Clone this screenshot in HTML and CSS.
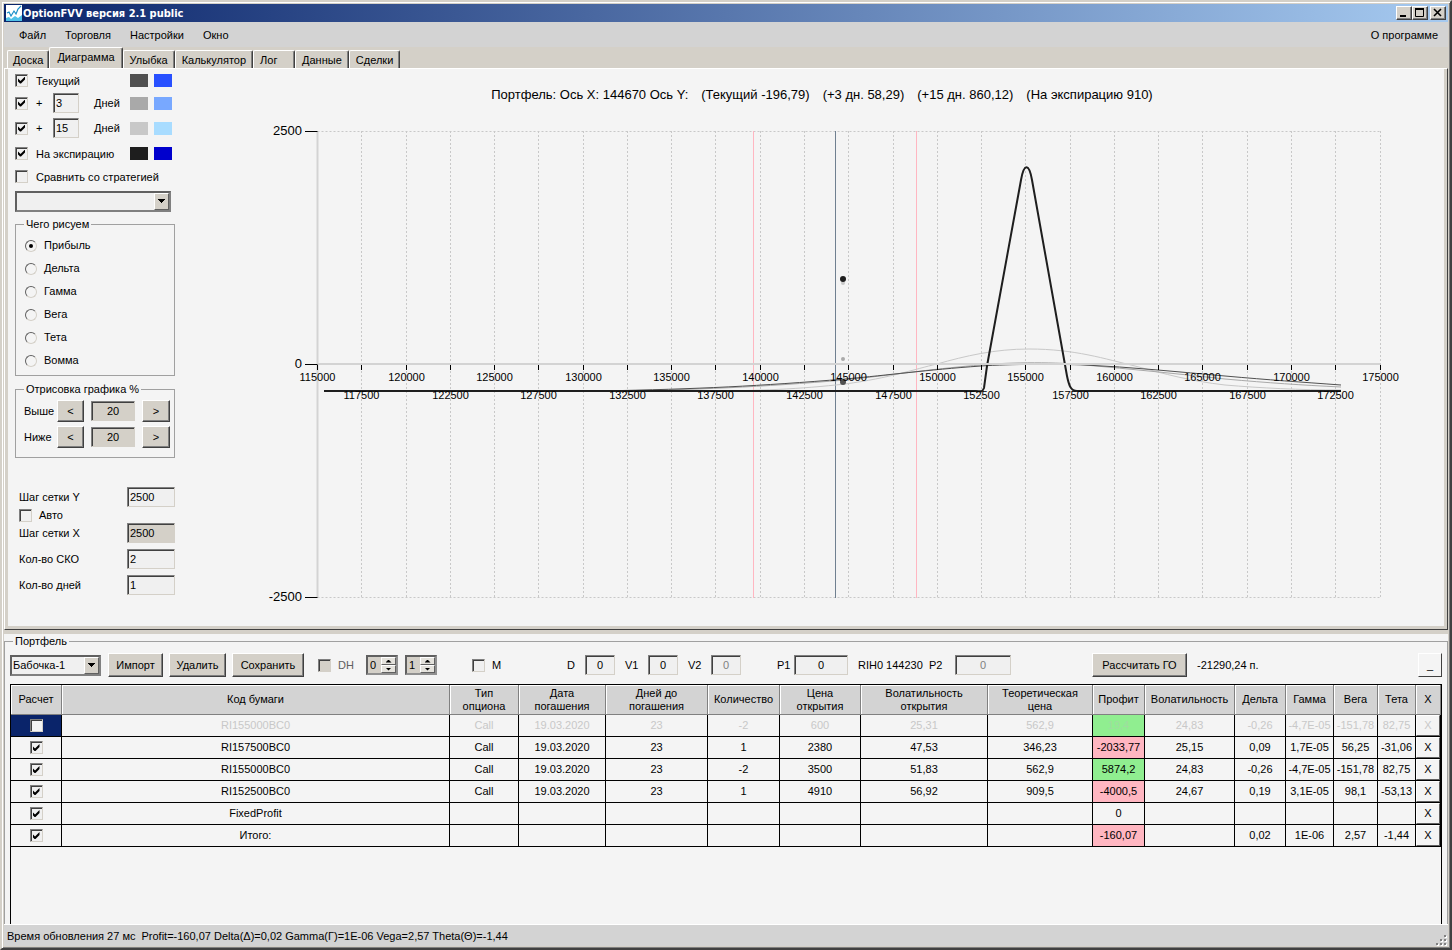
FILE: index.html
```html
<!DOCTYPE html>
<html lang="ru">
  <head>
    <meta charset="UTF-8" />
    <meta name="viewport" content="width=device-width, initial-scale=1.0" />
    <title>OptionFVV версия 2.1 public</title>
    <link rel="stylesheet" href="styles.css">
  </head>
  <body>
    <div class="window">
      <header class="titlebar">
        <svg class="app-icon" viewBox="0 0 16 16">
          <rect width="16" height="16" fill="#fff" />
          <path d="M0 16V13L3 12L5 14L9 11L12 13L16 10V16Z" fill="#4fc0e8" />
          <path d="M1 8L3 7L5 11L8 6L10 9L12 4L15 1" fill="none" stroke="#1c8fc8" stroke-width="1.2" />
        </svg>
        <h1>OptionFVV версия 2.1 public</h1>
        <div class="win-buttons">
          <button type="button" aria-label="Свернуть"><svg viewBox="0 0 12 10"><path d="M2 8h6" stroke="#000" stroke-width="2" /></svg></button>
          <button type="button" aria-label="Развернуть"><svg viewBox="0 0 12 10"><path d="M1.5 1v7.5h8V1" fill="none" stroke="#000" /><path d="M1 1h9" stroke="#000" stroke-width="2" /></svg></button>
          <button type="button" class="close" aria-label="Закрыть"><svg viewBox="0 0 12 10"><path d="M2 1l7 7M9 1l-7 7" stroke="#000" stroke-width="1.6" /></svg></button>
        </div>
      </header>

      <nav class="menu">
        <a href="#">Файл</a>
        <a href="#">Торговля</a>
        <a href="#">Настройки</a>
        <a href="#">Окно</a>
        <a href="#" class="about">О программе</a>
      </nav>

      <div class="tabs" role="tablist">
        <button type="button" role="tab">Доска</button>
        <button type="button" role="tab" class="active">Диаграмма</button>
        <button type="button" role="tab">Улыбка</button>
        <button type="button" role="tab">Калькулятор</button>
        <button type="button" role="tab">Лог</button>
        <button type="button" role="tab">Данные</button>
        <button type="button" role="tab">Сделки</button>
      </div>

      <main class="page">
        <div class="settings">
          <div class="lines">
            <div class="line-row">
              <input type="checkbox" id="l0" checked><label for="l0" class="wide">Текущий</label>
              <i class="swatch" style="background: #505050"></i><i class="swatch" style="background: #2850ff"></i>
            </div>
            <div class="line-row">
              <input type="checkbox" id="l1" checked><label for="l1">+</label>
              <input type="text" id="d1" value="3"><label for="d1">Дней</label>
              <i class="swatch" style="background: #a9a9a9"></i><i class="swatch" style="background: #78a8ff"></i>
            </div>
            <div class="line-row">
              <input type="checkbox" id="l2" checked><label for="l2">+</label>
              <input type="text" id="d2" value="15"><label for="d2">Дней</label>
              <i class="swatch" style="background: #c8c8c8"></i><i class="swatch" style="background: #a8dcff"></i>
            </div>
            <div class="line-row">
              <input type="checkbox" id="l3" checked><label for="l3" class="wide">На экспирацию</label>
              <i class="swatch" style="background: #1e1e1e"></i><i class="swatch" style="background: #0000cd"></i>
            </div>
            <div class="line-row">
              <input type="checkbox" id="l4"><label for="l4" class="full">Сравнить со стратегией</label>
            </div>
          </div>
          <div class="combo combo-compare">
            <select aria-label="Стратегия"><option></option></select>
            <svg class="combo-arrow" viewBox="0 0 13 15"><path d="M3 5h7v1h-1v1h-1v1h-1v1h-1v-1h-1v-1h-1v-1h-1z" /></svg>
          </div>

          <fieldset class="group what">
            <legend>Чего рисуем</legend>
            <label><input type="radio" name="what" checked>Прибыль</label>
            <label><input type="radio" name="what">Дельта</label>
            <label><input type="radio" name="what">Гамма</label>
            <label><input type="radio" name="what">Вега</label>
            <label><input type="radio" name="what">Тета</label>
            <label><input type="radio" name="what">Вомма</label>
          </fieldset>

          <fieldset class="group range">
            <legend>Отрисовка графика %</legend>
            <div class="range-row">
              <label for="above">Выше</label>
              <button type="button" class="btn">&lt;</button>
              <input type="text" id="above" value="20" class="flat">
              <button type="button" class="btn">&gt;</button>
            </div>
            <div class="range-row">
              <label for="below">Ниже</label>
              <button type="button" class="btn">&lt;</button>
              <input type="text" id="below" value="20" class="flat">
              <button type="button" class="btn">&gt;</button>
            </div>
          </fieldset>

          <div class="grid-fields">
            <div class="field"><label for="stepy">Шаг сетки Y</label><input type="text" id="stepy" value="2500"></div>
            <div class="auto"><input type="checkbox" id="auto"><label for="auto">Авто</label></div>
            <div class="field"><label for="stepx">Шаг сетки X</label><input type="text" id="stepx" value="2500" class="flat"></div>
            <div class="field"><label for="sko">Кол-во СКО</label><input type="text" id="sko" value="2"></div>
            <div class="field"><label for="days">Кол-во дней</label><input type="text" id="days" value="1"></div>
          </div>
        </div>

        <section class="chart">
          <h2>
            <span>Портфель: Ось X: 144670 Ось Y:</span>
            <span>(Текущий -196,79)</span>
            <span>(+3 дн. 58,29)</span>
            <span>(+15 дн. 860,12)</span>
            <span>(На экспирацию 910)</span>
          </h2>
          <svg id="plot" viewBox="176 105 1268 521" preserveAspectRatio="xMidYMin meet">
            <g id="grid"></g>
            <path class="mark pink" d="M753.5 131V598" />
            <path class="mark pink" d="M916.5 131V598" />
            <path class="mark price" d="M835.5 131V598" />
            <path class="curve c-15" d="M324 391H700C760 391 800 389 845 384C890 378 915 369 937 364C965 356 995 349 1029 349C1075 349 1105 359 1135 366C1165 374 1190 381 1225 385C1260 388 1300 390 1341 390" />
            <path class="curve c-3" d="M324 391H600C700 390 760 387 845 380C900 374 940 368 981 365C1010 362 1060 362 1085 365C1130 369 1180 374 1225 379C1270 383 1300 385 1341 387" />
            <path class="curve c-0" d="M324 391H600C700 389 760 386 845 379C890 375 925 370 981 366C1010 364 1060 364 1085 365C1130 367 1180 372 1225 376C1270 380 1300 382 1341 385" />
            <path class="curve c-exp" d="M324 391H976C980 391 982 393 984 388L987 366L1021 180C1024 163 1029 163 1032 180L1067 376C1069 386 1071 391 1077 391H1341" />
            <circle cx="843" cy="283" r="2" fill="#c8c8c8" />
            <circle cx="843" cy="279" r="3" fill="#1e1e1e" />
            <circle cx="843" cy="359" r="2" fill="#a9a9a9" />
            <circle cx="843" cy="382" r="3" fill="#505050" />
            <g id="axis"></g>
          </svg>
        </section>
      </main>

      <div class="bottom">
        <fieldset class="portfolio">
          <legend>Портфель</legend>
          <div class="toolbar">
            <div class="combo combo-name">
              <select aria-label="Портфель"><option>Бабочка-1</option></select>
              <svg class="combo-arrow" viewBox="0 0 13 15"><path d="M3 5h7v1h-1v1h-1v1h-1v1h-1v-1h-1v-1h-1v-1h-1z" /></svg>
            </div>
            <button type="button" class="btn b-import">Импорт</button>
            <button type="button" class="btn b-delete">Удалить</button>
            <button type="button" class="btn b-save">Сохранить</button>
            <div class="tool dh"><input type="checkbox" id="dh" disabled><label for="dh">DH</label></div>
            <div class="spin"><input type="number" value="0" aria-label="DH от"><span><button type="button" class="up" aria-label="Больше"></button><button type="button" class="down" aria-label="Меньше"></button></span></div>
            <div class="spin"><input type="number" value="1" aria-label="DH до"><span><button type="button" class="up" aria-label="Больше"></button><button type="button" class="down" aria-label="Меньше"></button></span></div>
            <div class="tool m"><input type="checkbox" id="m"><label for="m">M</label></div>
            <div class="tool d"><label for="dd">D</label><input type="text" id="dd" value="0"></div>
            <div class="tool v"><label for="v1">V1</label><input type="text" id="v1" value="0"></div>
            <div class="tool v"><label for="v2">V2</label><input type="text" id="v2" value="0" disabled></div>
            <div class="tool p1"><label for="p1">P1</label><input type="text" id="p1" value="0"></div>
            <span class="ticker">RIH0 144230</span>
            <div class="tool p2"><label for="p2">P2</label><input type="text" id="p2" value="0" disabled></div>
            <button type="button" class="btn b-calc">Рассчитать ГО</button>
            <span class="margin-sum">-21290,24 п.</span>
            <button type="button" class="btn plain b-min">_</button>
          </div>

          <div class="grid-box">
            <table>
              <colgroup>
                <col class="w51"><col><col class="w69"><col class="w87"><col class="w102"><col class="w72"><col class="w81"><col class="w127"><col class="w105"><col class="w52"><col class="w90"><col class="w51"><col class="w48"><col class="w44"><col class="w38"><col class="w25">
              </colgroup>
              <thead>
                <tr>
                  <th>Расчет</th><th>Код бумаги</th><th>Тип<br>опциона</th><th>Дата<br>погашения</th><th>Дней до<br>погашения</th><th>Количество</th><th>Цена<br>открытия</th><th>Волатильность<br>открытия</th><th>Теоретическая<br>цена</th><th>Профит</th><th>Волатильность</th><th>Дельта</th><th>Гамма</th><th>Вега</th><th>Тета</th><th>X</th>
                </tr>
              </thead>
              <tbody>
                <tr class="off">
                  <td class="selected"><input type="checkbox" aria-label="Расчет"></td><td>RI155000BC0</td><td>Call</td><td>19.03.2020</td><td>23</td><td>-2</td><td>600</td><td>25,31</td><td>562,9</td><td class="up">19,4</td><td>24,83</td><td>-0,26</td><td>-4,7E-05</td><td>-151,78</td><td>82,75</td><td><button type="button">X</button></td>
                </tr>
                <tr>
                  <td><input type="checkbox" aria-label="Расчет" checked></td><td>RI157500BC0</td><td>Call</td><td>19.03.2020</td><td>23</td><td>1</td><td>2380</td><td>47,53</td><td>346,23</td><td class="down">-2033,77</td><td>25,15</td><td>0,09</td><td>1,7E-05</td><td>56,25</td><td>-31,06</td><td><button type="button">X</button></td>
                </tr>
                <tr>
                  <td><input type="checkbox" aria-label="Расчет" checked></td><td>RI155000BC0</td><td>Call</td><td>19.03.2020</td><td>23</td><td>-2</td><td>3500</td><td>51,83</td><td>562,9</td><td class="up">5874,2</td><td>24,83</td><td>-0,26</td><td>-4,7E-05</td><td>-151,78</td><td>82,75</td><td><button type="button">X</button></td>
                </tr>
                <tr>
                  <td><input type="checkbox" aria-label="Расчет" checked></td><td>RI152500BC0</td><td>Call</td><td>19.03.2020</td><td>23</td><td>1</td><td>4910</td><td>56,92</td><td>909,5</td><td class="down">-4000,5</td><td>24,67</td><td>0,19</td><td>3,1E-05</td><td>98,1</td><td>-53,13</td><td><button type="button">X</button></td>
                </tr>
                <tr>
                  <td><input type="checkbox" aria-label="Расчет" checked></td><td>FixedProfit</td><td></td><td></td><td></td><td></td><td></td><td></td><td></td><td>0</td><td></td><td></td><td></td><td></td><td></td><td><button type="button">X</button></td>
                </tr>
                <tr>
                  <td><input type="checkbox" aria-label="Расчет" checked></td><td>Итого:</td><td></td><td></td><td></td><td></td><td></td><td></td><td></td><td class="down">-160,07</td><td></td><td>0,02</td><td>1E-06</td><td>2,57</td><td>-1,44</td><td><button type="button">X</button></td>
                </tr>
              </tbody>
            </table>
          </div>
        </fieldset>
      </div>

      <footer class="status">
        <span>Время обновления 27 мс</span>
        <span>Profit=-160,07 Delta(Δ)=0,02 Gamma(Γ)=1E-06 Vega=2,57 Theta(Θ)=-1,44</span>
        <svg class="grip" viewBox="0 0 12 12">
          <path d="M10 2h2v2h-2zM6 6h2v2h-2zM10 6h2v2h-2zM2 10h2v2h-2zM6 10h2v2h-2zM10 10h2v2h-2z" fill="#fff" />
          <path d="M9 1h2v2h-2zM5 5h2v2h-2zM9 5h2v2h-2zM1 9h2v2h-2zM5 9h2v2h-2zM9 9h2v2h-2z" fill="#808080" />
        </svg>
      </footer>
    </div>
    <script src="chart.js"></script>
  </body>
</html>
```

FILE: styles.css
```css
* {
  box-sizing: border-box;
}

body {
  margin: 0;
  font-family: "Liberation Sans", Arial, sans-serif;
  font-size: 11px;
  line-height: 13px;
  color: #000;
  background: #d4d0c8;
}

button,
input,
select {
  font: inherit;
  color: inherit;
  margin: 0;
  padding: 0;
  border-radius: 0;
}

.window {
  display: flex;
  flex-direction: column;
  min-height: 100vh;
  padding: 2px;
  border: 2px solid;
  border-color: #d4d0c8 #404040 #404040 #d4d0c8;
  box-shadow: inset 1px 1px 0 #fff, inset -1px -1px 0 #808080;
}

/* заголовок окна */
.titlebar {
  display: flex;
  align-items: center;
  height: 18px;
  padding: 0 2px;
  background: linear-gradient(to right, #0a246a, #a6caf0);
}

.app-icon {
  width: 16px;
  height: 16px;
}

.titlebar h1 {
  flex: 1;
  margin: 0 0 0 1px;
  font-family: "DejaVu Sans Condensed", "DejaVu Sans", sans-serif;
  font-size: 11px;
  color: #fff;
}

.win-buttons {
  display: flex;
}

.win-buttons button {
  display: flex;
  justify-content: center;
  align-items: center;
  width: 16px;
  height: 14px;
}

.win-buttons svg {
  width: 12px;
  height: 10px;
}

.win-buttons .close {
  margin-left: 2px;
}

.win-buttons button,
.btn {
  background: #d4d0c8;
  border: 1px solid;
  border-color: #fff #404040 #404040 #fff;
  box-shadow: inset -1px -1px 0 #808080;
}

.btn.plain {
  background: #f4f4f4;
  box-shadow: none;
}

/* меню */
.menu {
  display: flex;
  align-items: center;
  height: 25px;
  padding: 2px 10px 0 15px;
  gap: 19px;
  background: #d3d3d3;
}

.menu a {
  color: #000;
  text-decoration: none;
}

.menu .about {
  margin-left: auto;
}

/* вкладки */
.tabs {
  display: flex;
  align-items: flex-end;
  height: 21px;
  padding-left: 3px;
}

.tabs button {
  height: 18px;
  min-width: 42px;
  padding: 1px 6px 0;
  background: #d4d0c8;
  border: 1px solid;
  border-color: #fff #404040 #d4d0c8 #fff;
  border-bottom: 0;
  border-radius: 2px 2px 0 0;
  box-shadow: inset -1px 0 0 #808080;
  text-align: left;
  white-space: nowrap;
}

.tabs button:first-child {
  padding: 1px 5px 0;
}

.tabs .active {
  height: 21px;
  padding: 0 7px 2px;
}

/* страница с диаграммой */
.page {
  display: flex;
  min-height: 561px;
  padding: 0 3px 3px;
  background: #f4f4f4;
  border: 1px solid;
  border-color: #fff #404040 #404040 #fff;
  box-shadow: inset 3px 0 0 #d4d0c8, inset -3px -3px 0 #d4d0c8;
}

.settings {
  display: flex;
  flex-direction: column;
  flex: none;
  width: 168px;
  padding-left: 7px;
}

.lines {
  display: grid;
  grid-template-rows: 22px 24px 26px 24px 22px;
}

.line-row {
  display: grid;
  grid-template-columns: 21px 17px 41px 36px 24px 18px;
  align-items: center;
}

.line-row .wide {
  grid-column: span 3;
  padding-top: 2px;
}

.line-row .full {
  grid-column: span 5;
  padding-top: 2px;
}

.line-row input[type="text"] {
  width: 26px;
}

.swatch {
  width: 18px;
  height: 13px;
}

input[type="text"] {
  height: 20px;
  padding: 0 2px;
  background: #f0f0f0;
  border: 1px solid;
  border-color: #808080 #d4d0c8 #d4d0c8 #808080;
  box-shadow: inset 1px 1px 0 #404040;
}

input[type="text"].flat {
  background: #d4d0c8;
}

input:disabled {
  color: #808080;
}

input[type="checkbox"] {
  appearance: none;
  display: grid;
  place-items: center;
  width: 13px;
  height: 13px;
  background: #f0f0f0;
  border: 1px solid;
  border-color: #808080 #d4d0c8 #d4d0c8 #808080;
  box-shadow: inset 1px 1px 0 #404040;
}

input[type="checkbox"]:checked::after {
  content: "";
  width: 7px;
  height: 7px;
  background: #000;
  clip-path: polygon(0 29%, 0 71%, 29% 100%, 43% 100%, 100% 43%, 100% 0, 36% 64%);
}

input[type="checkbox"]:disabled {
  background: #d4d0c8;
}

input[type="radio"] {
  appearance: none;
  display: grid;
  place-items: center;
  width: 12px;
  height: 12px;
  background: #f4f4f4;
  border: 1px solid;
  border-color: #606060 #d4d0c8 #d4d0c8 #606060;
  border-radius: 50%;
}

input[type="radio"]:checked::after {
  content: "";
  width: 4px;
  height: 4px;
  background: #000;
  border-radius: 50%;
}

.combo {
  position: relative;
  height: 21px;
}

.combo select {
  appearance: none;
  width: 100%;
  height: 100%;
  padding: 0 1px;
  background: #f0f0f0;
  border: 2px solid;
  border-color: #606060 #808080 #808080 #606060;
}

.combo-arrow {
  position: absolute;
  top: 2px;
  right: 2px;
  width: 15px;
  height: 17px;
  background: #d4d0c8;
  border: 1px solid;
  border-color: #fff #606060 #606060 #fff;
  pointer-events: none;
}

.combo-compare {
  width: 156px;
  margin: 4px 0 6px;
}

.group {
  width: 160px;
  margin: 0;
  padding: 0;
  border: 1px solid #a0a0a0;
}

.group legend {
  margin-left: 8px;
  padding: 0 2px;
}

.what {
  height: 158px;
  padding-top: 3px;
}

.what label {
  display: flex;
  align-items: center;
  gap: 7px;
  height: 23px;
  padding-left: 9px;
}

.range {
  height: 75px;
  margin-top: 7px;
  padding-top: 2px;
}

.range-row {
  display: grid;
  grid-template-columns: 26px 27px 44px 28px;
  column-gap: 7px;
  align-items: center;
  height: 26px;
  padding-left: 8px;
}

.range-row .btn {
  height: 22px;
}

.range-row input {
  min-width: 0;
  text-align: center;
}

.grid-fields {
  padding: 29px 0 0 4px;
}

.field {
  display: flex;
  align-items: center;
  justify-content: space-between;
  width: 156px;
  margin-bottom: 6px;
}

.field input {
  width: 48px;
}

.auto {
  display: flex;
  align-items: center;
  gap: 7px;
  height: 16px;
  margin-top: -6px;
}

/* график */
.chart {
  flex: 1;
  min-width: 0;
}

.chart h2 {
  display: flex;
  justify-content: center;
  gap: 13px;
  height: 36px;
  margin: 0;
  padding: 17px 0 0 24px;
  font-size: 13px;
  font-weight: normal;
  line-height: 18px;
  white-space: nowrap;
}

#plot {
  display: block;
  width: 100%;
}

#plot text {
  font-size: 11px;
  text-anchor: middle;
}

#plot .y-label {
  font-size: 13px;
  text-anchor: end;
}

.grid-line {
  stroke: #c8c8c8;
  stroke-dasharray: 2 2;
}

.axis-line {
  stroke: #d3d3d3;
  stroke-width: 2;
}

.tick {
  stroke: #000;
}

.mark.pink {
  stroke: #ffb6c1;
}

.mark.price {
  stroke: #708090;
}

.curve {
  fill: none;
}

.c-0 {
  stroke: #505050;
}

.c-3 {
  stroke: #a9a9a9;
}

.c-15 {
  stroke: #c8c8c8;
}

.c-exp {
  stroke: #1e1e1e;
  stroke-width: 2;
}

/* портфель */
.bottom {
  display: flex;
  flex: 1;
  margin-top: 4px;
  padding-top: 1px;
  background: #f4f4f4;
}

.portfolio {
  display: flex;
  flex-direction: column;
  flex: 1;
  min-width: 0;
  margin: 0;
  padding: 4px 5px 0;
  border: 1px solid #a0a0a0;
  border-bottom: 0;
}

.portfolio legend {
  margin-left: 3px;
  padding: 0 2px;
}

.toolbar {
  display: flex;
  align-items: center;
  height: 26px;
  margin-bottom: 6px;
  white-space: nowrap;
}

.toolbar .btn {
  height: 24px;
  margin-right: 6px;
}

.combo-name {
  width: 91px;
  margin-right: 7px;
}

.b-import {
  width: 55px;
}

.b-delete {
  width: 57px;
}

.b-save {
  width: 72px;
}

.b-calc {
  width: 95px;
  margin-left: 81px;
}

.toolbar .b-min {
  width: 24px;
  margin: 0 0 0 auto;
}

.tool {
  display: flex;
  align-items: center;
}

.tool input[type="text"] {
  flex: none;
  text-align: center;
}

.dh {
  gap: 7px;
  width: 48px;
  margin-left: 8px;
  color: #606060;
}

.spin {
  display: flex;
  width: 32px;
  height: 20px;
  margin-right: 7px;
  background: #d4d0c8;
  border: 2px solid;
  border-color: #606060 #909090 #909090 #606060;
}

.spin input {
  appearance: textfield;
  width: 13px;
  padding-left: 2px;
  background: none;
  border: 0;
}

.spin input::-webkit-inner-spin-button {
  display: none;
}

.spin span {
  display: flex;
  flex-direction: column;
  width: 15px;
}

.spin button {
  display: grid;
  place-items: center;
  height: 8px;
  background: #e4e2dc;
  border: 1px solid;
  border-color: #fff #606060 #606060 #fff;
}

.spin button::after {
  content: "";
  width: 6px;
  height: 3px;
  background: #000;
  clip-path: polygon(50% 0, 100% 100%, 0 100%);
}

.spin .down::after {
  clip-path: polygon(0 0, 100% 0, 50% 100%);
}

.m {
  gap: 7px;
  width: 95px;
  margin-left: 28px;
}

.d label {
  width: 18px;
}

.d input,
.v input {
  width: 30px;
}

.v {
  margin-left: 10px;
}

.v label {
  width: 23px;
}

.p1 {
  margin-left: 36px;
}

.p1 label {
  width: 17px;
}

.p1 input {
  width: 54px;
}

.ticker {
  width: 81px;
  padding-left: 10px;
}

.p2 label {
  width: 26px;
}

.p2 input {
  width: 56px;
}

.margin-sum {
  margin-left: 4px;
}

.grid-box {
  flex: 1;
  border: 1px solid #000;
  border-bottom: 0;
}

table {
  width: 100%;
  table-layout: fixed;
  border-collapse: separate;
  border-spacing: 0;
  text-align: center;
}

.w25 { width: 25px; }
.w38 { width: 38px; }
.w44 { width: 44px; }
.w48 { width: 48px; }
.w51 { width: 51px; }
.w52 { width: 52px; }
.w69 { width: 69px; }
.w72 { width: 72px; }
.w81 { width: 81px; }
.w87 { width: 87px; }
.w90 { width: 90px; }
.w102 { width: 102px; }
.w105 { width: 105px; }
.w127 { width: 127px; }

th {
  height: 30px;
  padding: 0;
  background: #d3d3d3;
  border-right: 1px solid #808080;
  border-bottom: 1px solid #808080;
  box-shadow: inset 1px 1px 0 #fff;
  font-weight: normal;
}

td {
  height: 22px;
  padding: 0;
  border-right: 1px solid #000;
  border-bottom: 1px solid #000;
  white-space: nowrap;
}

td input[type="checkbox"] {
  margin: 0 auto;
}

td.selected {
  background: #0a246a;
}

td.selected input {
  background: #f4f4f4;
}

.off {
  color: #c8c8c8;
}

td.up {
  background: #90ee90;
}

td.down {
  background: #ffb6c1;
}

.off td.up {
  color: #a0dca0;
}

td button {
  display: block;
  width: 100%;
  height: 21px;
  background: #f4f4f4;
  border: 1px solid;
  border-color: #fff #606060 #606060 #fff;
}

/* строка состояния */
.status {
  display: flex;
  align-items: center;
  gap: 6px;
  height: 22px;
  padding: 2px 1px 0 3px;
  background: #d3d3d3;
  border-top: 1px solid #fff;
}

.grip {
  width: 12px;
  height: 12px;
  margin-left: auto;
  align-self: flex-end;
}
```

FILE: chart.js
```js
const NS = "http://www.w3.org/2000/svg";
const LEFT = 317.5;
const RIGHT = 1380;
const TOP = 131;
const BOTTOM = 598;
const ZERO = 364;

function line(parent, cls, x1, y1, x2, y2) {
  const el = document.createElementNS(NS, "line");
  el.setAttribute("class", cls);
  el.setAttribute("x1", x1);
  el.setAttribute("y1", y1);
  el.setAttribute("x2", x2);
  el.setAttribute("y2", y2);
  parent.appendChild(el);
}

function label(parent, cls, x, y, text) {
  const el = document.createElementNS(NS, "text");
  el.setAttribute("class", cls);
  el.setAttribute("x", x);
  el.setAttribute("y", y);
  el.textContent = text;
  parent.appendChild(el);
}

const grid = document.getElementById("grid");
const axis = document.getElementById("axis");

// сетка
line(grid, "grid-line", LEFT, TOP + 0.5, RIGHT, TOP + 0.5);
line(grid, "grid-line", LEFT, BOTTOM - 0.5, RIGHT, BOTTOM - 0.5);
line(grid, "axis-line", LEFT, TOP, LEFT, BOTTOM);
line(axis, "axis-line", LEFT, ZERO, RIGHT, ZERO);

// подписи по X, чётные и нечётные в два ряда
for (let i = 0; i <= 24; i++) {
  const x = Math.floor(LEFT + ((RIGHT - LEFT) * i) / 24) + 0.5;
  if (i > 0) line(grid, "grid-line", x, TOP, x, BOTTOM);
  line(axis, "tick", x, ZERO + 1, x, ZERO + 6);
  label(axis, "x-label", x, i % 2 ? 399 : 381, 115000 + i * 2500);
}

// подписи по Y
[[2500, TOP], [0, ZERO], [-2500, BOTTOM - 1]].forEach(([v, y]) => {
  line(axis, "tick", 305, y + 0.5, LEFT, y + 0.5);
  label(axis, "y-label", 302, y + 4, v);
});
```
